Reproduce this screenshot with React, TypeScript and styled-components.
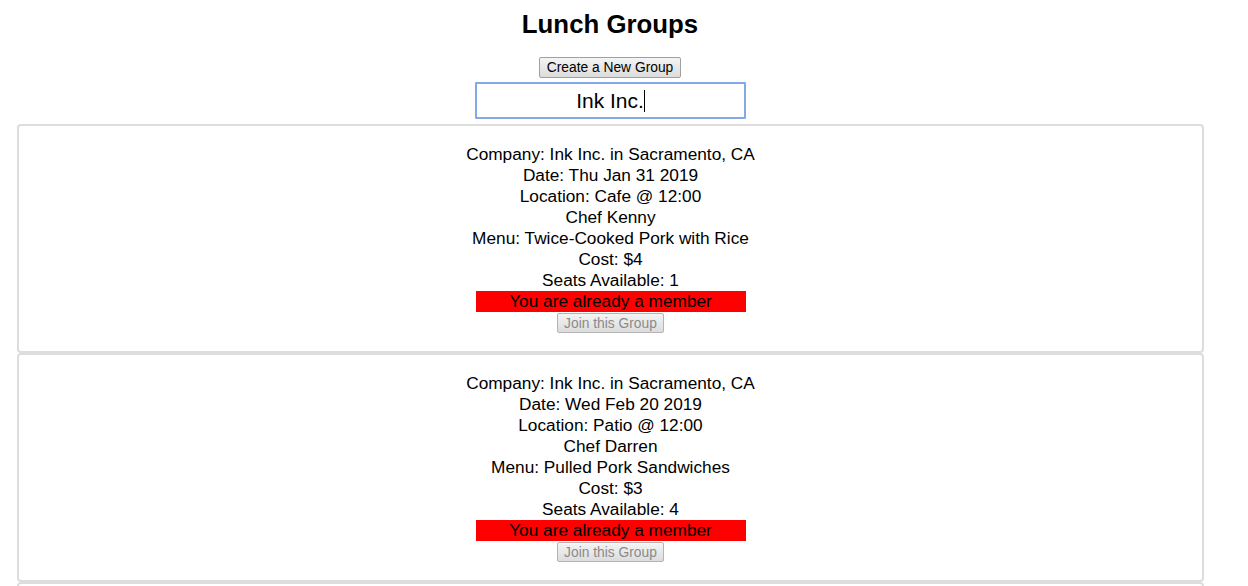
import React from "react";
import styled, { createGlobalStyle } from "styled-components";

const Global = createGlobalStyle`
  html, body { margin: 0; padding: 0; background: #fff; }
  body { font-family: "Liberation Sans", Arial, sans-serif; color: #000; }
`;

const Page = styled.div`
  width: 1204px;
  padding-left: 8px;
  display: flex;
  flex-direction: column;
  align-items: center;
`;

const Title = styled.h1`
  margin: 10px 0 18px;
  font-size: 25.8px;
  line-height: 29px;
  font-weight: bold;
`;

const Button = styled.button`
  height: 21px;
  box-sizing: border-box;
  padding: 0 7px;
  white-space: nowrap;
  font-family: "Liberation Sans", Arial, sans-serif;
  font-size: 13.8px;
  color: ${(p) => (p.disabled ? "#8a8a8a" : "#000")};
  background: linear-gradient(#f4f4f4, #dcdcdc);
  border: 1px solid ${(p) => (p.disabled ? "#b4b4b4" : "#a0a0a0")};
  border-radius: 2px;
`;

const SearchWrap = styled.div`
  position: relative;
  margin-top: 4px;
  width: 271px;
  height: 37px;
`;

const Search = styled.input`
  width: 100%;
  height: 100%;
  box-sizing: border-box;
  border: 2px solid #84a9e8;
  border-radius: 1px;
  outline: none;
  text-align: center;
  font-family: "Liberation Sans", Arial, sans-serif;
  font-size: 21px;
  color: #000;
  caret-color: transparent;
`;

const Caret = styled.span`
  position: absolute;
  left: calc(50% + 34px);
  top: 8px;
  width: 1px;
  height: 22px;
  background: #000;
`;

const List = styled.div`
  align-self: stretch;
  margin: 5px 8px 0 9px;
  display: flex;
  flex-direction: column;
`;

const Card = styled.div`
  border: 2px solid #ddd;
  border-radius: 4px;
  padding: 18px 0 18px;
  display: flex;
  flex-direction: column;
  align-items: center;
  font-size: 17.25px;
  line-height: 21px;
`;

const Line = styled.div`
  text-align: center;
`;

const Member = styled.div`
  width: 270px;
  height: 21px;
  background: #ff0000;
  text-align: center;
  font-size: 17.25px;
  line-height: 21px;
`;

const JoinButton = styled(Button)`
  margin-top: 1px;
  height: 20px;
  width: 107px;
  padding: 0;
`;

type Group = {
  company: string;
  city: string;
  date: string;
  location: string;
  time: string;
  chef: string;
  menu: string;
  cost: number;
  seats: number;
};

const groups: Group[] = [
  {
    company: "Ink Inc.",
    city: "Sacramento, CA",
    date: "Thu Jan 31 2019",
    location: "Cafe",
    time: "12:00",
    chef: "Kenny",
    menu: "Twice-Cooked Pork with Rice",
    cost: 4,
    seats: 1,
  },
  {
    company: "Ink Inc.",
    city: "Sacramento, CA",
    date: "Wed Feb 20 2019",
    location: "Patio",
    time: "12:00",
    chef: "Darren",
    menu: "Pulled Pork Sandwiches",
    cost: 3,
    seats: 4,
  },
  {
    company: "Ink Inc.",
    city: "Sacramento, CA",
    date: "Fri Mar 15 2019",
    location: "Cafe",
    time: "12:00",
    chef: "Kenny",
    menu: "Fried Rice",
    cost: 4,
    seats: 2,
  },
];

export default function App() {
  return (
    <>
      <Global />
      <Page>
        <Title>Lunch Groups</Title>
        <Button>Create a New Group</Button>
        <SearchWrap>
          <Search defaultValue="Ink Inc." />
          <Caret />
        </SearchWrap>
        <List>
          {groups.map((g, i) => (
            <Card key={i}>
              <Line>
                Company: {g.company} in {g.city}
              </Line>
              <Line>Date: {g.date}</Line>
              <Line>
                Location: {g.location} @ {g.time}
              </Line>
              <Line>Chef {g.chef}</Line>
              <Line>Menu: {g.menu}</Line>
              <Line>Cost: ${g.cost}</Line>
              <Line>Seats Available: {g.seats}</Line>
              <Member>You are already a member</Member>
              <JoinButton disabled>Join this Group</JoinButton>
            </Card>
          ))}
        </List>
      </Page>
    </>
  );
}
